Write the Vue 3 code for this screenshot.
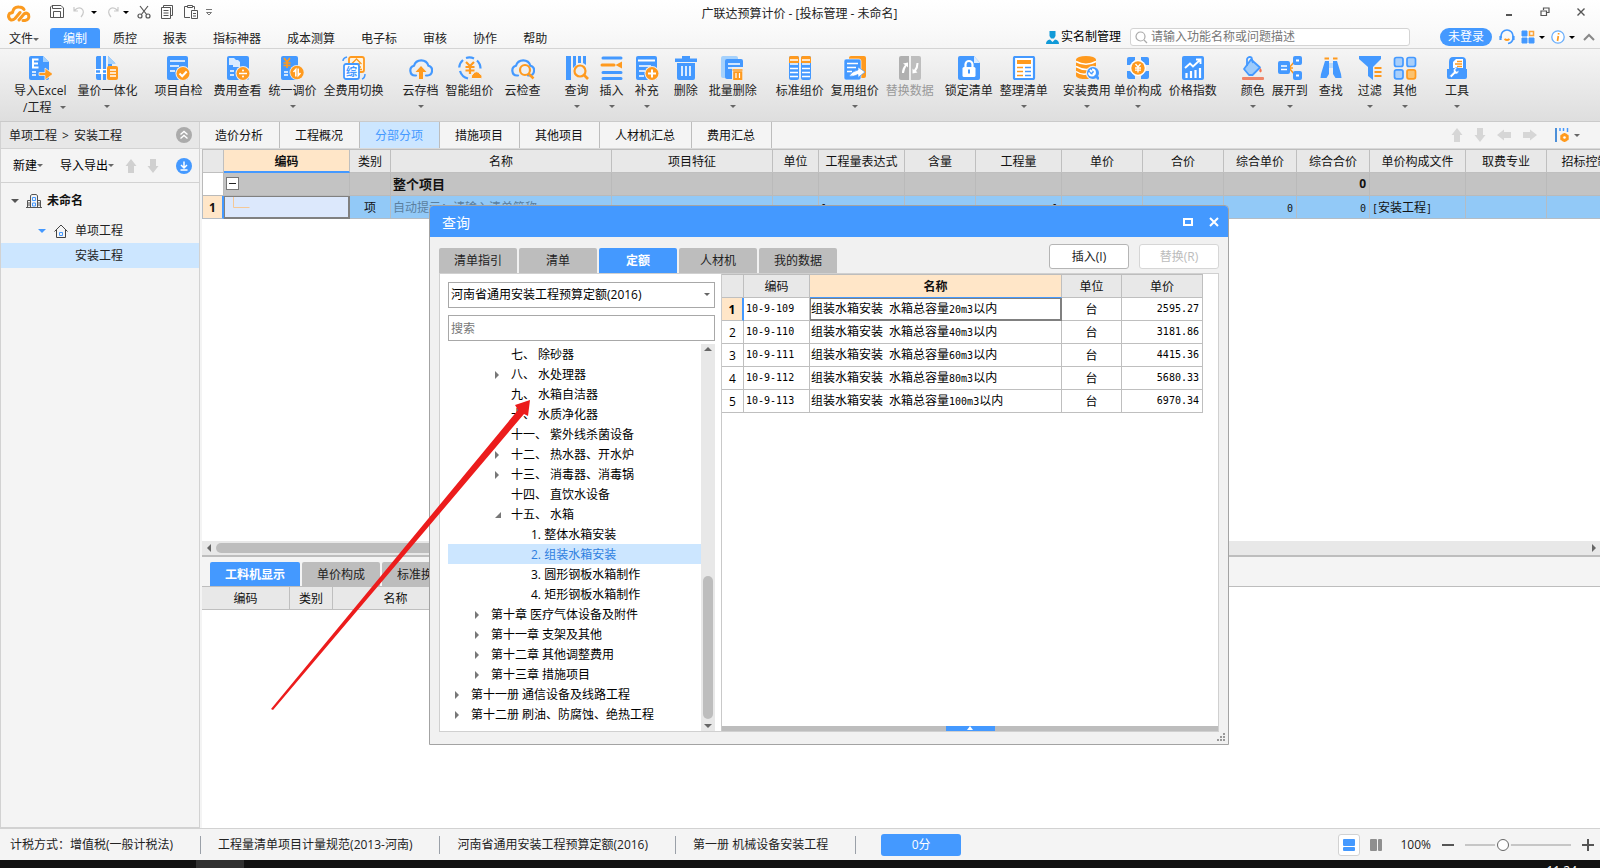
<script setup>
import { ref } from 'vue'

const menus = ['编制', '质控', '报表', '指标神器', '成本测算', '电子标', '审核', '协作', '帮助']

const B = '#4499ff'
const O = '#ff9a1e'
const L = '#a5d1fc'
const badge = (inner) => `<circle cx="17" cy="17.500" r="7.500" fill="#eeeeee"/><circle cx="17" cy="17.500" r="6.500" fill="${O}"/>${inner}`
const cloud = `<path d="M7 19.500H6a5 5 0 0 1-1-9.800a7.500 7.500 0 0 1 14.400 0A5 5 0 0 1 18.500 19.500H17" fill="none" stroke="${B}" stroke-width="2.200" stroke-linecap="round"/>`
const icons = {
  excel: `<path d="M3 0h12l6 6v16a2 2 0 0 1-2 2H3a2 2 0 0 1-2-2V2a2 2 0 0 1 2-2z" fill="${B}"/><path d="M15 0v6h6z" fill="${L}"/><path d="M10.500 3.500H5v8h5.500M5 7.500h5" fill="none" stroke="#fff" stroke-width="2"/><path d="M4 16h4M4 19h4" stroke="#fff" stroke-width="1.500"/><path d="M11 16.500h6V12l8 6-8 6v-4.500h-6z" fill="${O}" stroke="#eee" stroke-width=".8"/>`,
  merge: `<path d="M2 0h4v24H3a2 2 0 0 1-2-2V1zM8 0h3v13H8zM13 0l7 7h-3v4h-4z" fill="${B}"/><path d="M8 16h3v8H8z" fill="${B}"/><path d="M13 0l8 8h-8z" fill="${L}"/><path d="M0 13h12v5H0z" fill="#fff"/><path d="M1 15.500h4M8 15.500h3" stroke="${B}" stroke-width="2.500"/><rect x="12" y="10" width="11" height="14" rx="2" fill="${O}"/><path d="M15 14h6M15 17h6M15 20h6" stroke="#fff" stroke-width="1.300"/>`,
  check: `<rect x="1" y="0" width="21" height="24" rx="2" fill="${B}"/><path d="M4 5h15M4 10h9M4 15h5" stroke="#fff" stroke-width="1.600"/>${badge('<path d="M13.500 17.500l2.700 2.700 4.500-4.700" fill="none" stroke="#fff" stroke-width="2"/>')}`,
  fee: `<rect x="1" y="0" width="22" height="24" rx="2" fill="${B}"/><path d="M3 2h5l2 2v5H3zM7 4h5l2 2v5H7z" fill="#d9ebff"/><path d="M4 15h4M4 19h4" stroke="#fff" stroke-width="1.500"/>${badge('<path d="M13 17.500h8" stroke="#fff" stroke-width="1.500"/><circle cx="17" cy="14.500" r="1" fill="#fff"/><circle cx="17" cy="20.500" r="1" fill="#fff"/>')}`,
  adjust: `<rect x="0" y="0" width="17" height="24" rx="2" fill="${B}"/><path d="M3 2l3 4 3-4M6 6v6M2.500 7h7M2.500 9.500h7" fill="none" stroke="${O}" stroke-width="1.700"/><path d="M3 16h4M3 19h4" stroke="#fff" stroke-width="1.500"/><circle cx="16" cy="16.500" r="7.500" fill="#eee"/><circle cx="16" cy="16.500" r="6.700" fill="${O}"/><path d="M14.800 20.500v-7l-2.300 2.500M17.200 12.500v7l2.300-2.500" fill="none" stroke="#fff" stroke-width="1.500"/>`,
  full: `<rect x="7" y="1" width="15" height="15" rx="2" fill="#fff4e0" stroke="${O}" stroke-width="1.800"/><path d="M9.500 8l5-5 5 5M11 8h7M14.500 8v6M17 11h2M17 13.500h3" fill="none" stroke="${O}" stroke-width="1.300"/><rect x="2" y="8" width="15" height="15" rx="2" fill="#fff" stroke="${B}" stroke-width="1.800"/><text x="4" y="20" font-size="11" font-weight="700" fill="${B}">综</text><path d="M1 5q0-3 4-4M23 18q0 4-3 5" fill="none" stroke="${B}" stroke-width="1.500"/>`,
  cloudUp: `${cloud}<path d="M12 10l5.500 6H14v7h-4v-7H6.500z" fill="${O}"/>`,
  smart: `<path d="M10 22.500A11 11 0 0 1 2 15M1.200 11.500A11 11 0 0 1 5 4M8 2a11 11 0 0 1 8 .5M19 4.500a11 11 0 0 1 3.500 8" fill="none" stroke="${B}" stroke-width="2.200"/><path d="M8 6l4 4 4-4M12 10v8M7.500 11h9M7.500 14.500h9" fill="none" stroke="${O}" stroke-width="2.200"/><path d="M14 22.500a3 3 0 0 1 1-4.500 3.800 3.800 0 0 1 7 0 2.500 2.500 0 0 1 1 4.500z" fill="${O}" stroke="#eee"/>`,
  cloudFind: `${cloud}<circle cx="14" cy="14" r="5" fill="#f0f0f0" stroke="${O}" stroke-width="2.200"/><path d="M17.500 17.500l5 5" stroke="${O}" stroke-width="2.500"/>`,
  query: `<path d="M1 0h5v24H1zM8 0h3v9l-3 3zM13 0h3v7h-3zM18 0h3v9l-3-2z" fill="${B}"/><circle cx="15" cy="15" r="5.500" fill="#eee" stroke="${O}" stroke-width="2.200"/><path d="M19 19l4 4" stroke="${O}" stroke-width="2.600"/>`,
  insert: `<path d="M3 2h18M3 16.500h18M3 22.500h18" stroke="${B}" stroke-width="3" stroke-linecap="round"/><path d="M2 9h12" stroke="${O}" stroke-width="3" stroke-linecap="round"/><path d="M22 5.500v7L15.500 9z" fill="${O}"/>`,
  supply: `<rect x="1" y="0" width="21" height="24" rx="2" fill="${B}"/><path d="M3 4.500h17" stroke="#fff" stroke-width="2"/><path d="M4 10h12M4 15h6M4 20h5" stroke="#fff" stroke-width="1.500"/>${badge('<path d="M13 17.500h8M17 13.500v8" stroke="#fff" stroke-width="2"/>')}`,
  trash: `<path d="M1 2.500h7V0h8v2.500h7V6H1zM3 7h18v15a2 2 0 0 1-2 2H5a2 2 0 0 1-2-2z" fill="${B}"/><path d="M8 10v10M12 10v10M16 10v10" stroke="#fff" stroke-width="1.600"/>`,
  batch: `<rect x="0" y="0" width="17" height="22" rx="2" fill="${L}"/><rect x="4" y="3" width="18" height="20" rx="2" fill="${B}"/><path d="M7 8h12M7 12h6" stroke="#fff" stroke-width="1.500"/><path d="M11 11h12v13H11z" fill="#eee"/><path d="M11.500 14h10M13 16h7.500v8H13z" stroke="${O}" stroke-width="1.600" fill="${O}"/><path d="M15 17v5M18.500 17v5" stroke="#fff" stroke-width="1.200"/>`,
  standard: `<rect x="1" y="0" width="10" height="24" rx="2" fill="${B}"/><rect x="13" y="0" width="10" height="24" rx="2" fill="${B}"/><path d="M1 7V2a2 2 0 0 1 2-2h6a2 2 0 0 1 2 2v5zM13 7V2a2 2 0 0 1 2-2h6a2 2 0 0 1 2 2v5z" fill="${O}"/><path d="M2 4h8M14 4h8M2 8h8M14 8h8M2 12.500h8M14 12.500h8M2 16.500h8M14 16.500h8M2 20.500h8M14 20.500h8" stroke="#fff" stroke-width="1.400"/>`,
  reuse: `<rect x="6" y="0" width="17" height="22" rx="2" fill="${O}"/><rect x="1" y="3" width="17" height="21" rx="2" fill="${B}" stroke="#fff" stroke-width=".6"/><path d="M4 7.500h11M4 11.500h9M4 15.500h5" stroke="#fff" stroke-width="1.500"/><path d="M6 20q5 1 9-1.500v3l7-5.500-7-5v3q-6 1-9 6z" fill="#fff" stroke="${B}" stroke-width=".7"/>`,
  swap: `<path d="M3 0h8v24H3a2 2 0 0 1-2-2V2a2 2 0 0 1 2-2z" fill="#b0b0b0"/><path d="M13 0h8a2 2 0 0 1 2 2v20a2 2 0 0 1-2 2h-8z" fill="#bebebe"/><path d="M4 17q0-5 3-8l-2-1.500 5-1v5l-1.500-1.500Q6.500 13 6 17zM20.500 7q0 5-2.500 8l1.500 1.500-5 1v-5l1.500 1.500Q18.500 11 18.500 7z" fill="#fff"/>`,
  lock: `<path d="M3 0h14l6 7v15a2 2 0 0 1-2 2H3a2 2 0 0 1-2-2V2a2 2 0 0 1 2-2z" fill="${B}"/><path d="M17 0v7h6z" fill="#dcecff"/><rect x="5.500" y="11" width="13" height="10" rx="1.500" fill="#fff"/><path d="M8.500 11V8.500a3.500 3.500 0 0 1 7 0V11" fill="none" stroke="#fff" stroke-width="2.200"/><path d="M12 13.500v4" stroke="${B}" stroke-width="2"/>`,
  tidy: `<rect x="2" y="1" width="20" height="22" rx="1" fill="#fff" stroke="${B}" stroke-width="2.200"/><rect x="5" y="4" width="14" height="4" fill="${O}"/><path d="M5 11.500h6M5 15.500h6M5 19.500h6" stroke="${O}" stroke-width="1.600"/><path d="M13 11.500h6M13 15.500h6M13 19.500h6" stroke="${B}" stroke-width="1.600"/>`,
  install: `<path d="M1 3.500v16C1 21.500 5 23 9 23h5v-8l7-4V3.500z" fill="${O}"/><ellipse cx="11" cy="3.700" rx="10" ry="3.700" fill="${O}"/><path d="M1 5.500q10 5.500 20 0M1 10.500q10 5.500 18 1M1 15.500q6 4 12 2" fill="none" stroke="#fff" stroke-width="1.500"/><circle cx="18" cy="17" r="7.200" fill="#eee"/><circle cx="18" cy="17" r="6" fill="${B}"/><path d="M15 14l2 2M23 22l-5-5M17 13.500a3 3 0 1 1-3 3" stroke="#fff" stroke-width="1.900" fill="none"/><path d="M20 19l4 4" stroke="${B}" stroke-width="3"/>`,
  unit: `<path d="M3 1h6v3l-5 5H1V3a2 2 0 0 1 2-2zM15 1h6a2 2 0 0 1 2 2v6h-3l-5-5zM1 15h3l5 5v3H3a2 2 0 0 1-2-2zM20 15h3v6a2 2 0 0 1-2 2h-6v-3z" fill="${B}"/><circle cx="12" cy="12" r="8" fill="#fff"/><circle cx="12" cy="12" r="6.700" fill="${O}"/><path d="M9.500 8l2.500 3 2.500-3M12 11v5.500M9 12h6M9 14.200h6" fill="none" stroke="#fff" stroke-width="1.300"/>`,
  price: `<rect x="1" y="0" width="22" height="24" rx="2" fill="${B}"/><path d="M4 12l5-4.500 3 3L19 4M15 3.500h4.500V8" fill="none" stroke="#fff" stroke-width="1.900"/><path d="M5.500 22v-5M10 22v-7M14.500 22v-8M19 22V12" stroke="#fff" stroke-width="2.200"/>`,
  color: `<path d="M10 3.500l9 8-7.500 7.500H8L3 13z" fill="#9dcbfb" stroke="${B}" stroke-width="1.800" stroke-linejoin="round"/><path d="M6 10V3a3 3 0 0 1 4.500-1.500L12 7" fill="none" stroke="${B}" stroke-width="1.800"/><path d="M19.500 12q2.500 3 0 4.500-2.500-1.500 0-4.500z" fill="#f4744f"/><rect x="1" y="21" width="22" height="3" rx="1" fill="#ef8467"/>`,
  expand: `<path d="M11 12h4M11 12l6-7M11 12l6 7" stroke="${O}" stroke-width="1.600"/><rect x="0" y="5" width="12" height="13" rx="2" fill="${B}"/><path d="M3 10h6M3 13.500h6" stroke="#fff" stroke-width="1.500"/><rect x="15" y="0" width="9" height="9" rx="2" fill="${B}"/><rect x="15" y="15" width="9" height="9" rx="2" fill="${B}"/><path d="M18 4.500h3M18 19.500h3" stroke="#fff" stroke-width="2"/>`,
  find: `<path d="M6 5h4v13L7.500 22H1.500L2 18zM14 5h4l4 13 .5 4h-6L14 18z" fill="${B}"/><path d="M10 7h4v5h-4z" fill="#b9d9fb"/><path d="M5.500 2.500h4.500M14 2.500h4.500" stroke="${O}" stroke-width="2"/>`,
  filter: `<path d="M1 0h22v3l-8 8v13l-5-4v-9L1 3z" fill="${B}"/><path d="M16.500 12h7M16.500 16h7M16.500 20h7" stroke="${O}" stroke-width="1.800"/>`,
  other: `<g stroke-width="1.700" stroke="${B}" fill="#a9cffa"><rect x="1.500" y="1.500" width="8.500" height="9" rx="2"/><rect x="14" y="1.500" width="8.500" height="9" rx="2"/><rect x="1.500" y="13.800" width="8.500" height="9" rx="2"/></g><rect x="14" y="13.800" width="8.500" height="9" rx="2" fill="#fbc26f" stroke="${O}" stroke-width="1.700"/>`,
  tool: `<path d="M8 1h9a4 4 0 0 1 4 4v8h1v8a2 2 0 0 1-2 2H4a2 2 0 0 1-2-2v-8h2V6q0-5 4-5z" fill="${B}"/><path d="M8 12V6l3-3h7v9z" fill="#fff"/><path d="M12 5.500h5M10 8h7M12 10.500h5" stroke="${O}" stroke-width="1.300"/><path d="M4.500 20l4-4a3.500 3.500 0 0 1 4-4.500l-2 2.500 1 1.500 2.500-1a3.500 3.500 0 0 1-4 3.500l-3.500 3.500z" fill="#fff" stroke="${B}" stroke-width=".6"/>`
}

const ribbon = [
  { t: '导入Excel', sub: '/工程', i: 'excel', g: 'g0', c: 1 },
  { t: '量价一体化', i: 'merge', g: 'g11', c: 1 },
  { t: '项目自检', i: 'check', g: 'g17' },
  { t: '费用查看', i: 'fee', g: 'g11' },
  { t: '统一调价', i: 'adjust', g: 'g7', c: 1 },
  { t: '全费用切换', i: 'full', g: 'g7' },
  { t: '云存档', i: 'cloudUp', g: 'g19', c: 1 },
  { t: '智能组价', i: 'smart', g: 'g7' },
  { t: '云检查', i: 'cloudFind', g: 'g11' },
  { t: '查询', i: 'query', g: 'g24', c: 1 },
  { t: '插入', i: 'insert', g: 'g11', c: 1 },
  { t: '补充', i: 'supply', g: 'g11', c: 1 },
  { t: '删除', i: 'trash', g: 'g15' },
  { t: '批量删除', i: 'batch', g: 'g11', c: 1 },
  { t: '标准组价', i: 'standard', g: 'g19' },
  { t: '复用组价', i: 'reuse', g: 'g7', c: 1 },
  { t: '替换数据', i: 'swap', g: 'g7', off: 1 },
  { t: '锁定清单', i: 'lock', g: 'g11' },
  { t: '整理清单', i: 'tidy', g: 'g7', c: 1 },
  { t: '安装费用', i: 'install', g: 'g15', c: 1 },
  { t: '单价构成', i: 'unit', g: 'g3', c: 1 },
  { t: '价格指数', i: 'price', g: 'g7' },
  { t: '颜色', i: 'color', g: 'g24', c: 1 },
  { t: '展开到', i: 'expand', g: 'g7', c: 1 },
  { t: '查找', i: 'find', g: 'g11' },
  { t: '过滤', i: 'filter', g: 'g15', c: 1 },
  { t: '其他', i: 'other', g: 'g11', c: 1 },
  { t: '工具', i: 'tool', g: 'g28', c: 1 }
]

const subTabs = ['造价分析', '工程概况', '分部分项', '措施项目', '其他项目', '人材机汇总', '费用汇总']

const cols = [
  ['', 22], ['编码', 126], ['类别', 41], ['名称', 221], ['项目特征', 161], ['单位', 46], ['工程量表达式', 86],
  ['含量', 71], ['工程量', 86], ['单价', 81], ['合价', 81], ['综合单价', 73], ['综合合价', 73],
  ['单价构成文件', 96], ['取费专业', 81], ['招标控制价', 90]
]
const item = [
  ['项', 'mid'], ['自动提示：请输入清单简称', 'hint'], [''], [''], ['1'], [''], ['1', 'num'], [''], [''],
  ['0', 'num'], ['0', 'num'], ['[安装工程]'], [''], ['']
]

const dlgTabs = ['清单指引', '清单', '定额', '人材机', '我的数据']
const tree = [
  ['七、 除砂器', 2, ''], ['八、 水处理器', 2, 'r'], ['九、 水箱自洁器', 2, ''], ['十、 水质净化器', 2, ''],
  ['十一、 紫外线杀菌设备', 2, ''], ['十二、 热水器、开水炉', 2, 'r'], ['十三、 消毒器、消毒锅', 2, 'r'],
  ['十四、 直饮水设备', 2, ''], ['十五、 水箱', 2, 'd'], ['1. 整体水箱安装', 3, ''], ['2. 组装水箱安装', 3, ''],
  ['3. 圆形钢板水箱制作', 3, ''], ['4. 矩形钢板水箱制作', 3, ''], ['第十章 医疗气体设备及附件', 1, 'r'],
  ['第十一章 支架及其他', 1, 'r'], ['第十二章 其他调整费用', 1, 'r'], ['第十三章 措施项目', 1, 'r'],
  ['第十一册 通信设备及线路工程', 0, 'r'], ['第十二册 刷油、防腐蚀、绝热工程', 0, 'r']
]
const quota = [
  ['10-9-109', '组装水箱安装 水箱总容量20m3以内', '2595.27'],
  ['10-9-110', '组装水箱安装 水箱总容量40m3以内', '3181.86'],
  ['10-9-111', '组装水箱安装 水箱总容量60m3以内', '4415.36'],
  ['10-9-112', '组装水箱安装 水箱总容量80m3以内', '5680.33'],
  ['10-9-113', '组装水箱安装 水箱总容量100m3以内', '6970.34']
]
// Splits a cell into Latin and Chinese runs so that each run gets its own face.
const runs = (s) => s.match(/[\x20-\x7e]+|[^\x20-\x7e]+/g) || []
const latin = (s) => /^[\x20-\x7e]/.test(s)

const selected = ref(10)
const zoom = ref(34)
const keyword = ref('')
const search = ref('')
</script>

<template>
  <div class="app">
    <header class="titlebar">
      <svg class="logo" width="24" height="18" viewBox="0 0 24 18" fill="none" stroke="#fb9a1f" stroke-width="3" stroke-linecap="round" stroke-linejoin="round">
        <path d="M13 7.500L8 13.500Q6 15.500 4 15Q0 12.500 2.500 8.500L5.500 7.500Q6.500 1.500 12 2Q15.500 2 17 4.500" />
        <path d="M12 15L17 9Q19.500 7 21.500 9.500Q23 14.500 18 15.500H16" />
      </svg>
      <div class="quick">
        <button aria-label="保存"><svg width="16" height="16" viewBox="0 0 16 16" fill="none" stroke="#555"><path d="M1.500 3v10.500h13V4L12 1.500H3L1.500 3zM3.500 1.500v3h9M4.500 13.500v-6h7v6" /></svg></button>
        <button class="dim" aria-label="撤销"><svg width="14" height="14" viewBox="0 0 14 14" fill="none" stroke="#c9c9c9" stroke-width="1.200"><path d="M2 2v4h4M2.500 5.500Q6 1.500 9.500 3.500q4 3-.5 8.500" /></svg></button>
        <i class="tri black"></i>
        <button class="dim r" aria-label="恢复"><svg width="14" height="14" viewBox="0 0 14 14" fill="none" stroke="#c9c9c9" stroke-width="1.200"><path d="M12 2v4H8M11.500 5.500Q8 1.500 4.500 3.500q-4 3 .5 8.500" /></svg></button>
        <i class="tri black"></i>
        <button class="cut" aria-label="剪切"><svg width="14" height="14" viewBox="0 0 14 14" fill="none" stroke="#555" stroke-width="1.200"><path d="M3 1l7 9M11 1L4 10" /><circle cx="3" cy="11" r="2" /><circle cx="11" cy="11" r="2" /></svg></button>
        <button class="cp" aria-label="复制"><svg width="14" height="16" viewBox="0 0 14 16" fill="none" stroke="#555"><path d="M3.500 3V1.500h9v10H11M1.500 3.500h9v11h-9zM3.500 6.500h5M3.500 9h5M3.500 11.500h5" /></svg></button>
        <button class="cp" aria-label="粘贴"><svg width="16" height="16" viewBox="0 0 16 16" fill="none" stroke="#555"><path d="M7 13.500H1.500v-11h3M9 2.500h2.500v3M4.500 3.500v-2h5v2zM8.500 6.500h6v8h-6zM10 9.500h3M10 12h3" /></svg></button>
        <svg class="more" width="8" height="8" viewBox="0 0 8 8" fill="none" stroke="#777"><path d="M1 1.500h6M1.500 4.500h5L4 7z" /></svg>
      </div>
      <h1>广联达预算计价 - [投标管理 - 未命名]</h1>
      <div class="winbtns">
        <button aria-label="最小化"><svg width="10" height="10" viewBox="0 0 10 10"><path d="M2 8h6" stroke="#555" stroke-width="2" /></svg></button>
        <button aria-label="还原"><svg width="10" height="10" viewBox="0 0 10 10" fill="none" stroke="#555" stroke-width="1.200"><path d="M3.500 3V1h5.500v4.500H7M1 4h5.500v4.500H1z" /></svg></button>
        <button aria-label="关闭"><svg width="10" height="10" viewBox="0 0 10 10" stroke="#555" stroke-width="1.400"><path d="M1.500 1.500l7 7M8.500 1.500l-7 7" /></svg></button>
      </div>
    </header>

    <nav class="menubar">
      <button class="file">文件<i class="tri"></i></button>
      <button v-for="(m, k) in menus" :key="m" class="menu" :class="{ on: k === 0 }">{{ m }}</button>
      <div class="right">
        <button class="realname"><svg width="13" height="13" viewBox="0 0 13 13" fill="#109ad8"><path d="M3.500 0h6v5L8 7.500H5L3.500 5zM0 13q0-4 4-4.500L6.500 11 9 8.500q4 .5 4 4.500z" /></svg>实名制管理</button>
        <label class="find"><svg width="13" height="13" viewBox="0 0 13 13" fill="none" stroke="#aaa" stroke-width="1.200"><circle cx="5.500" cy="5.500" r="4.500" /><path d="M9 9l3 3" /></svg><input v-model="search" type="text" placeholder="请输入功能名称或问题描述" aria-label="搜索功能" /></label>
        <button class="login">未登录</button>
        <button class="i1" aria-label="客服"><svg width="16" height="16" viewBox="0 0 16 16" fill="none" stroke-width="1.700"><path d="M2 9V7a6 6 0 0 1 12 0v3q-1 4-5 4.500" stroke="#4499ff" /><path d="M1.500 7v4M14.500 7v4" stroke="#4499ff" stroke-width="2.200" /><path d="M5.500 10q2.500 2 5 0" stroke="#ff9a1e" /></svg></button>
        <button class="i2" aria-label="应用"><svg width="14" height="14" viewBox="0 0 14 14"><path d="M1 1h5v5H1zM1 8h5v5H1zM8 8h5v5H8z" fill="#4499ff" stroke="#4499ff" stroke-linejoin="round" /><rect x="8.500" y="1.500" width="4" height="4" fill="none" stroke="#fba53c" stroke-width="1.500" /></svg><i class="tri black"></i></button>
        <button class="i2" aria-label="信息"><svg width="14" height="14" viewBox="0 0 14 14"><circle cx="7" cy="7" r="6.200" fill="#fff" stroke="#6aaefb" stroke-width="1.300" /><path d="M7.600 3v1.500M7.300 6l-.8 5" stroke="#ff9a1e" stroke-width="1.700" /></svg><i class="tri black"></i></button>
        <button class="i3" aria-label="收起功能区"><svg width="12" height="8" viewBox="0 0 12 8" fill="none" stroke="#888" stroke-width="2"><path d="M1 7l5-5 5 5" /></svg></button>
      </div>
    </nav>

    <section class="ribbon">
      <button v-for="r in ribbon" :key="r.t" class="tool" :class="[r.g, { off: r.off }]">
        <svg width="24" height="24" viewBox="0 0 24 24" v-html="icons[r.i]"></svg>
        <span>{{ r.t }}</span>
        <span v-if="r.sub" class="sub">{{ r.sub }}<i class="tri"></i></span>
        <i v-else-if="r.c" class="tri below"></i>
      </button>
    </section>

    <div class="work">
      <aside>
        <div class="crumb">
          <span>单项工程</span><span class="gt">&gt;</span><span>安装工程</span>
          <button aria-label="折叠"><svg width="16" height="16" viewBox="0 0 16 16"><circle cx="8" cy="8" r="8" fill="#ababab" /><path d="M4.500 7.500L8 4.500l3.500 3M4.500 11.500L8 8.500l3.500 3" fill="none" stroke="#fff" stroke-width="1.400" /></svg></button>
        </div>
        <div class="ptools">
          <button>新建<i class="tri"></i></button>
          <button class="io">导入导出<i class="tri"></i></button>
          <button class="ar" aria-label="上移"><svg width="12" height="16" viewBox="0 0 12 16" fill="#d0d0d0"><path d="M6 1l5.500 7H9v7H3V8H.5z" /></svg></button>
          <button class="ar" aria-label="下移"><svg width="12" height="16" viewBox="0 0 12 16" fill="#d0d0d0"><path d="M6 15L.5 8H3V1h6v7h2.500z" /></svg></button>
          <button class="dl" aria-label="下载"><svg width="16" height="16" viewBox="0 0 16 16"><circle cx="8" cy="8" r="8" fill="#4499ff" /><path d="M8 3.500v6M5 7l3 3 3-3M4.500 12h7" fill="none" stroke="#fff" stroke-width="1.500" /></svg></button>
        </div>
        <ul class="ptree">
          <li class="root"><i class="tri big"></i>
            <svg width="16" height="16" viewBox="0 0 16 16" fill="none" stroke="#555"><path d="M0 14.500h16M4.500 14V2.500L6 1.500h4l1.500 1V14M1.500 14V7.500h3M14.500 14V7.500h-3M2 10h2M2 12h2M12 10h2M12 12h2" /><path d="M6.500 4.500h3v3h-3zM6.500 10h3v3h-3z" stroke="#4499ff" /></svg>未命名</li>
          <li class="child"><i class="tri big blue"></i>
            <svg width="14" height="14" viewBox="0 0 14 14" fill="none" stroke="#444"><path d="M.5 7.500L7 1l6.500 6.500M2.500 6v7.500h9V6" /><path d="M5.500 8.500h3v3h-3z" stroke="#4499ff" /></svg>单项工程</li>
          <li class="leaf">安装工程</li>
        </ul>
      </aside>

      <main>
        <div class="subtabs">
          <button v-for="(s, k) in subTabs" :key="s" :class="{ on: k === 2 }">{{ s }}</button>
          <div class="nav">
            <svg width="12" height="16" viewBox="0 0 12 16" fill="#d6d6d6"><path d="M6 1l5.500 7H9v7H3V8H.5z" /></svg>
            <svg width="12" height="16" viewBox="0 0 12 16" fill="#d6d6d6"><path d="M6 15L.5 8H3V1h6v7h2.500z" /></svg>
            <svg width="16" height="12" viewBox="0 0 16 12" fill="#d6d6d6"><path d="M1 6L8 .5V3h7v6H8v2.500z" /></svg>
            <svg width="16" height="12" viewBox="0 0 16 12" fill="#d6d6d6"><path d="M15 6L8 .5V3H1v6h7v2.500z" /></svg>
            <button class="gear" aria-label="列设置"><svg width="14" height="16" viewBox="0 0 14 16"><path d="M1 1v14" stroke="#4c8fd8" stroke-width="2" /><path d="M5 1v3M8.500 1v3M12.500 1v4" stroke="#4499ff" stroke-width="1.500" /><circle cx="9.500" cy="10.500" r="3" fill="none" stroke="#ff9a1e" stroke-width="2.500" /><path d="M9.500 6v9M5.500 8.500l8 4M5.500 12.500l8-4" stroke="#ff9a1e" stroke-width="1.500" /><circle cx="9.500" cy="10.500" r="1.300" fill="#fff" /></svg><i class="tri"></i></button>
          </div>
        </div>

        <div class="upper">
          <table class="grid main">
            <colgroup><col v-for="(c, k) in cols" :key="k" :style="{ width: c[1] + 'px' }" /></colgroup>
            <thead><tr><th v-for="(c, k) in cols" :key="k" :class="{ cur: k === 1 }">{{ c[0] }}</th></tr></thead>
            <tbody>
              <tr class="total">
                <td class="no"></td>
                <td class="branch"><svg width="14" height="14" viewBox="0 0 14 14"><rect x=".5" y=".5" width="12" height="12" fill="#fff" stroke="#777" /><path d="M3 6.500h7" stroke="#222" /></svg></td>
                <td></td><td class="strong">整个项目</td>
                <td v-for="k in 8" :key="k"></td><td class="num strong">0</td><td></td><td></td><td></td>
              </tr>
              <tr class="item">
                <td class="no cur">1</td>
                <td class="edit"><svg width="26" height="20" viewBox="0 0 26 20"><path d="M8.500 0v10.500h16" fill="none" stroke="#f5c896" /></svg></td>
                <td v-for="(c, k) in item" :key="k" :class="c[1]"><span v-for="(r, n) in runs(c[0])" :key="n" :class="{ mono: latin(r) }">{{ r }}</span></td>
              </tr>
            </tbody>
          </table>
        </div>
        <div class="hscroll"><i class="left"></i><div class="thumb"></div><i class="rgt"></i></div>
        <div class="lower">
          <div class="ltabs"><button class="on">工料机显示</button><button>单价构成</button><button>标准换算</button></div>
          <table class="grid sub">
            <colgroup><col class="w88" /><col class="w43" /><col class="w126" /></colgroup>
            <thead><tr><th>编码</th><th>类别</th><th>名称</th></tr></thead>
          </table>
        </div>
      </main>
    </div>

    <footer class="status">
      <span>计税方式：增值税(一般计税法)</span>
      <span>工程量清单项目计量规范(2013-河南)</span>
      <span>河南省通用安装工程预算定额(2016)</span>
      <span>第一册 机械设备安装工程</span>
      <button class="score">0分</button>
      <div class="view">
        <button class="v on" aria-label="上下布局"><svg width="12" height="12" viewBox="0 0 12 12" fill="#4499ff"><rect width="12" height="7" rx="1" /><rect y="8" width="12" height="4" rx="1" /></svg></button>
        <button class="v" aria-label="左右布局"><svg width="12" height="12" viewBox="0 0 12 12" fill="#8f8f8f"><rect width="7" height="12" rx="1" /><rect x="8" width="4" height="12" rx="1" /></svg></button>
        <span class="pct">100%</span>
        <button aria-label="缩小"><svg width="12" height="12" viewBox="0 0 12 12"><path d="M0 6h12" stroke="#555" stroke-width="2" /></svg></button>
        <input v-model="zoom" type="range" min="0" max="100" aria-label="缩放" />
        <button aria-label="放大"><svg width="12" height="12" viewBox="0 0 12 12"><path d="M0 6h12M6 0v12" stroke="#555" stroke-width="2" /></svg></button>
      </div>
    </footer>
    <div class="taskbar"><div class="task"></div><time>11:24</time></div>

    <section class="dialog" role="dialog" aria-label="查询">
      <div class="dhead">
        <h2>查询</h2>
        <button aria-label="最大化"><svg width="10" height="10" viewBox="0 0 10 10"><rect x="1" y="2" width="8" height="6" fill="none" stroke="#fff" stroke-width="2" /></svg></button>
        <button aria-label="关闭查询"><svg width="10" height="10" viewBox="0 0 10 10" stroke="#fff" stroke-width="2"><path d="M1 1l8 8M9 1L1 9" /></svg></button>
      </div>
      <div class="dbar">
        <button v-for="(t, k) in dlgTabs" :key="t" class="dtab" :class="{ on: k === 2 }">{{ t }}</button>
        <div class="acts"><button class="act">插入(I)</button><button class="act" disabled>替换(R)</button></div>
      </div>
      <div class="dbody">
        <div class="lib">
          <div class="sel"><select aria-label="定额库"><option>河南省通用安装工程预算定额(2016)</option></select><i class="tri"></i></div>
          <input v-model="keyword" class="kw" type="text" placeholder="搜索" aria-label="搜索定额" />
          <div class="treebox">
            <ul class="qtree">
              <li v-for="(n, k) in tree" :key="k" :class="['l' + n[1], { picked: k === selected }]" @click="selected = k"><i :class="n[2]"></i>{{ n[0] }}</li>
            </ul>
            <div class="vscroll"><i class="up"></i><div class="vthumb"></div><i class="down"></i></div>
          </div>
        </div>
        <div class="result">
          <table class="grid quota">
            <colgroup><col class="w22" /><col class="w66" /><col class="w252" /><col class="w60" /><col class="w81" /></colgroup>
            <thead><tr><th></th><th>编码</th><th class="cur">名称</th><th>单位</th><th>单价</th></tr></thead>
            <tbody>
              <tr v-for="(q, k) in quota" :key="q[0]">
                <td class="no" :class="{ cur: k === 0 }">{{ k + 1 }}</td>
                <td class="mono">{{ q[0] }}</td>
                <td class="name" :class="{ edit: k === 0 }"><span v-for="(r, n) in runs(q[1])" :key="n" :class="{ mono: latin(r) }">{{ r }}</span></td>
                <td class="mid">台</td>
                <td class="num mono">{{ q[2] }}</td>
              </tr>
            </tbody>
          </table>
          <div class="split"><button aria-label="展开详情"><svg width="6" height="5" viewBox="0 0 6 5" fill="#fff"><path d="M3 0l3 4H0z" /></svg></button></div>
        </div>
      </div>
      <svg class="grip" width="9" height="9" viewBox="0 0 9 9" fill="#999"><path d="M6 0h2v2H6zM3 3h2v2H3zM6 3h2v2H6zM0 6h2v2H0zM3 6h2v2H3zM6 6h2v2H6z" /></svg>
    </section>

    <svg class="pointer" width="270" height="320" viewBox="0 0 270 320" aria-hidden="true">
      <path d="M0 311L247 12 244 7 259 2 257 18 253 16 2 312z" fill="#ec1c1c" />
    </svg>
  </div>
</template>

<style>
body {
  margin: 0;
  overflow: hidden;
}
</style>

<style scoped>
.app {
  position: relative;
  display: flex;
  flex-direction: column;
  height: 100vh;
  overflow: hidden;
  background: #f4f4f4;
  color: #222;
  font: 12px/16px "Open Sans", "Noto Sans CJK SC", sans-serif;
}
button, input, select {
  font: inherit;
  color: inherit;
  border: 0;
  padding: 0;
  margin: 0;
  background: none;
}
button {
  display: inline-flex;
  align-items: center;
  justify-content: center;
  white-space: nowrap;
}
svg { flex: none; display: block; }
ul { list-style: none; margin: 0; padding: 0; }
h1, h2 { margin: 0; font: inherit; }
.tri {
  flex: none;
  border: 3px solid transparent;
  border-top-color: #666;
  border-bottom: 0;
}
.tri.black { border-top-color: #000; }
.tri.big { border-width: 4px 4px 0; border-top-color: #555; }
.tri.big.blue { border-top-color: #4499ff; }

.titlebar {
  display: grid;
  grid-template-columns: 33px 1fr auto 1fr;
  align-items: center;
  height: 28px;
  background: linear-gradient(#fff, #fafafa);
}
.logo { margin-left: 7px; }
.quick {
  display: flex;
  align-items: center;
  margin: 0 0 4px 16px;
}
.quick .dim { margin: 0 5px 0 7px; }
.quick .r { margin: 0 3px 0 9px; }
.quick .cut { margin-left: 8px; }
.quick .cp { margin-left: 9px; }
.quick .more { margin-left: 6px; }
h1 { margin-right: 34px; }
.winbtns {
  display: flex;
  justify-content: flex-end;
  gap: 26px;
  margin: 0 14px 4px 0;
}
.menubar {
  display: flex;
  align-items: stretch;
  height: 20px;
  background: linear-gradient(#fafafa, #f5f5f5);
  border-bottom: 1px solid #d4d4d4;
}
.file { width: 50px; padding: 2px 0 0 9px; justify-content: flex-start; }
.menu { padding: 2px 13px 0; }
.menu.on { background: #4499ff; color: #fff; border-radius: 3px 3px 0 0; }
.right {
  display: flex;
  align-items: center;
  margin-left: auto;
  padding: 0 5px 2px 0;
}
.realname { gap: 2px; margin-right: 9px; color: #000; }
.find {
  display: flex;
  align-items: center;
  width: 274px;
  height: 16px;
  gap: 3px;
  padding-left: 4px;
  background: #fff;
  border: 1px solid #d4d4d4;
  border-radius: 3px;
}
.find input { flex: 1; min-width: 0; height: 16px; outline: 0; }
input::placeholder { color: #777; opacity: 1; }
.login { width: 52px; height: 18px; margin: 0 7px 0 30px; border-radius: 9px; background: #4499ff; color: #fff; }
.i1 { margin-right: 6px; }
.i2 { gap: 4px; margin-right: 6px; }
.i3 { margin-left: 2px; }

.ribbon {
  display: flex;
  align-items: flex-start;
  height: 65px;
  padding: 7px 0 0 14px;
  background: linear-gradient(#f5f5f5, #dedede);
  border-bottom: 1px solid #cacaca;
}
.tool { flex: none; flex-direction: column; line-height: 18px; }
.tool span { margin-top: 2px; }
.tool .sub { display: flex; align-items: center; gap: 9px; margin: -1px 0 0 9px; line-height: 17px; }
.tool .below { margin-top: 5px; }
.tool.off { color: #999; }
.g3 { margin-left: 3px; }
.g7 { margin-left: 7px; }
.g11 { margin-left: 11px; }
.g15 { margin-left: 15px; }
.g17 { margin-left: 17px; }
.g19 { margin-left: 19px; }
.g24 { margin-left: 24px; }
.g28 { margin-left: 28px; }

.work { display: flex; flex: 1; min-height: 0; }
aside {
  flex: none;
  width: 198px;
  border: solid #d2d2d2;
  border-width: 0 1px 1px;
  background: #f4f4f4;
}
.crumb {
  display: flex;
  align-items: center;
  height: 26px;
  padding: 0 7px 0 8px;
  background: #e7e7e7;
  border-bottom: 1px solid #d2d2d2;
}
.crumb span { padding-top: 2px; }
.crumb .gt { margin: 0 5px; }
.crumb button { margin-left: auto; }
.ptools {
  display: flex;
  align-items: center;
  height: 33px;
  padding: 0 7px 0 12px;
  border-bottom: 1px solid #d2d2d2;
  color: #000;
}
.io { margin: 0 11px 0 17px; }
.ar { margin-right: 10px; }
.dl { margin-left: auto; }
.ptree { padding-top: 5px; }
.ptree li { display: flex; align-items: center; height: 25px; }
.ptree svg { margin: 0 7px; }
.root { padding-left: 10px; font-weight: 700; color: #111; margin-bottom: 5px; }
.ptree .root svg { margin-right: 5px; }
.child { padding-left: 37px; }
.child .tri { margin-right: 1px; }
.ptree .leaf { padding-left: 74px; background: #cce6ff; }

main {
  display: flex;
  flex-direction: column;
  flex: 1;
  min-width: 0;
  background: #f4f4f4;
}
.subtabs { display: flex; flex: none; height: 26px; border-bottom: 1px solid #d9d9d9; }
.subtabs > button { padding: 2px 16px 0 15px; border-right: 1px solid #bdbdbd; color: #111; background: #f4f4f4; }
.subtabs > button.on { background: #cce6ff; color: #4499ff; }
.nav { display: flex; align-items: center; gap: 11px; margin: 0 20px 0 auto; }
.nav svg + svg { margin-right: -1px; }
.gear { gap: 5px; margin-left: 7px; }
.upper { flex: 1; min-height: 0; margin-left: 2px; background: #fff; overflow: hidden; }

.grid {
  table-layout: fixed;
  width: 0;
  border-collapse: separate;
  border-spacing: 0;
  border-top: 1px solid #bdbdbd;
  color: #111;
}
.grid th, .grid td {
  box-sizing: border-box;
  height: 23px;
  padding: 2px 2px 0;
  border: solid #bfbfbf;
  border-width: 0 1px 1px 0;
  white-space: nowrap;
  overflow: hidden;
  text-align: left;
  line-height: 16px;
}
.grid th { background: #e8e8e8; font-weight: 400; text-align: center; }
.grid th.cur { background: #ffe6c8; font-weight: 700; border-bottom: 1px solid #4499ff; }
.main th.cur { border-bottom-width: 2px; }
.grid th:first-child, .grid td:first-child { border-left: 1px solid #bfbfbf; }
.grid .mid { text-align: center; }
.grid .num { text-align: right; padding-right: 3px; }
.grid .no { text-align: center; padding: 2px 0 0; }
.grid .no.cur { background: #ffe6c8; font-weight: 700; border-right: 2px solid #4499ff; }
.grid .mono { font-family: "DejaVu Sans Mono", monospace; font-size: 10px; white-space: pre; }
.grid td.mono { padding-top: 0; }
.grid td.edit { border: solid #808080; border-width: 1px 2px 2px 1px; padding: 1px 1px 0; }
.grid td.branch { padding-top: 0; }
.main .total td { background: #c3c3c3; border-color: #bababa; }
.main .total .no { background: #fff; }
.main .strong { font-size: 13px; font-weight: 700; padding-top: 0; }
.main .strong.num { font-size: 12px; }
.main .item td { background: #92c9f7; border-color: #b4bcc4; }
.main .item .no { background: #ffe6c8; border-right-color: #4499ff; }
.main .item td.edit { background: #dce8fc; border-color: #808080; padding: 0; vertical-align: top; }
.main .item .hint { color: #5a7f9f; }
.quota td { background: #fff; color: #000; }
.quota td.name { padding: 1px 1px 0; }
.quota td.edit { padding-left: 0; }

.hscroll { display: flex; align-items: center; flex: none; height: 14px; margin-left: 2px; padding: 0 4px 0 5px; background: #e8e8e8; border-bottom: 2px solid #bdbdbd; }
.hscroll i { flex: none; border: 4px solid transparent; }
.hscroll .left { border-left: 0; border-right: 4px solid #666; }
.hscroll .rgt { border-right: 0; border-left: 4px solid #666; margin-left: auto; }
.thumb { flex: none; width: 40%; height: 10px; margin-left: 5px; border-radius: 5px; background: #bdbdbd; }
.lower { flex: none; height: 271px; margin-left: 2px; background: #fff; }
.ltabs { display: flex; gap: 2px; height: 24px; padding: 5px 0 0 8px; background: #f4f4f4; border-bottom: 1px solid #bdbdbd; }
.ltabs button { padding: 2px 15px 0; border-radius: 2px 2px 0 0; background: #bdbdbd; }
.ltabs .on { background: #4499ff; color: #fff; font-weight: 700; }
.sub { border-top: 0; }
.sub th:first-child { border-left: 0; }
.w22 { width: 22px; }
.w43 { width: 43px; }
.w60 { width: 60px; }
.w66 { width: 66px; }
.w81 { width: 81px; }
.w88 { width: 88px; }
.w126 { width: 126px; }
.w252 { width: 252px; }

.status { display: flex; align-items: center; flex: none; height: 31px; padding-left: 10px; border-top: 1px solid #d2d2d2; background: #f4f4f4; }
.status > span { display: flex; align-items: center; height: 18px; padding-right: 27px; margin-right: 17px; border-right: 1px solid #9aa0a8; white-space: nowrap; }
.score { width: 80px; height: 22px; margin-left: 8px; border-radius: 3px; background: #4499ff; color: #fff; }
.view { display: flex; align-items: center; margin-left: auto; padding-right: 6px; }
.v { box-sizing: border-box; width: 22px; height: 22px; margin-right: 5px; }
.v.on { background: #fff; border: 1px solid #d2d2d2; border-radius: 3px; }
.pct { margin: 0 11px 0 8px; }
.view input { appearance: none; width: 106px; height: 14px; margin: 0 11px; }
.view input::-webkit-slider-runnable-track { height: 2px; background: #c6c6c6; }
.view input::-webkit-slider-thumb { appearance: none; box-sizing: border-box; width: 12px; height: 12px; margin-top: -5px; border: 1px solid #666; border-radius: 50%; background: #fff; box-shadow: 0 0 0 2px #f4f4f4; }
.taskbar { display: flex; justify-content: space-between; flex: none; height: 8px; padding: 0 23px 0 196px; background: #111; overflow: hidden; }
.task { width: 48px; height: 8px; background: #303030; }
time { padding-top: 3px; color: #fff; }

.dialog {
  position: absolute;
  left: 429px;
  top: 205px;
  box-sizing: border-box;
  width: 800px;
  height: 540px;
  display: flex;
  flex-direction: column;
  border: 1px solid #a3a3a3;
  border-radius: 4px 4px 0 0;
  background: #f1f1f1;
}
.dhead { display: flex; align-items: center; gap: 16px; flex: none; height: 31px; padding: 0 9px 0 12px; border-radius: 3px 3px 0 0; background: #4499ff; color: #fff; }
.dhead h2 { margin-right: auto; font-size: 14px; line-height: 20px; padding-top: 3px; }
.dbar { display: flex; align-items: flex-end; flex: none; gap: 2px; height: 36px; padding: 0 9px; }
.dtab { width: 78px; height: 25px; border-radius: 2px 2px 0 0; background: #bdbdbd; }
.dtab.on { background: #4499ff; color: #fff; font-weight: 700; }
.acts { display: flex; gap: 10px; margin: 0 0 4px auto; }
.act { box-sizing: border-box; width: 80px; height: 25px; border: 1px solid #b5b5b5; border-radius: 3px; background: #fff; }
.act:disabled { border-color: #d6d6d6; color: #bcbcbc; }
.dbody { display: flex; flex: 1; min-height: 0; margin: 0 9px 12px; border: 1px solid #d0d0d0; background: #fff; }
.lib { display: flex; flex-direction: column; flex: none; box-sizing: border-box; width: 282px; padding: 8px 6px 0 8px; border-right: 1px solid #c9c9c9; }
.sel { position: relative; margin-bottom: 7px; }
.sel select, .kw { display: block; box-sizing: border-box; width: 100%; height: 26px; padding: 0 2px; border: 1px solid #a8a8a8; background: #fff; appearance: none; color: #000; outline: 0; }
.sel .tri { position: absolute; right: 5px; top: 11px; }
.kw { margin-bottom: 3px; }
.treebox { display: flex; flex: 1; min-height: 0; }
.qtree { flex: 1; min-width: 0; overflow: hidden; color: #000; white-space: nowrap; }
.qtree li { display: flex; align-items: center; box-sizing: border-box; height: 20px; padding-top: 2px; }
.qtree .picked { background: #cce6ff; color: #2f7fe0; }
.qtree i { flex: none; box-sizing: border-box; width: 4px; height: 8px; margin-right: 12px; }
.qtree .r { border: solid transparent; border-width: 4px 0 4px 4px; border-left-color: #777; }
.qtree .d { width: 6px; height: 6px; margin-right: 10px; border: solid transparent; border-width: 0 0 6px 6px; border-bottom-color: #777; }
.l0 { padding-left: 7px; }
.l1 { padding-left: 27px; }
.l2 { padding-left: 47px; }
.l3 { padding-left: 67px; }
.vscroll { display: flex; flex-direction: column; align-items: center; justify-content: flex-end; box-sizing: border-box; width: 14px; padding: 3px 0; background: #e8e8e8; }
.vscroll i { flex: none; border: 4px solid transparent; }
.up { margin-bottom: auto; }
.vscroll .up { border-top-width: 0; border-bottom-color: #666; }
.vscroll .down { border-bottom-width: 0; border-top-color: #666; margin-top: 5px; }
.vthumb { width: 10px; height: 143px; border-radius: 5px; background: #bdbdbd; }
.result { display: flex; flex-direction: column; flex: 1; min-width: 0; }
.quota th:first-child, .quota td:first-child { border-left: 0; }
.split { display: flex; justify-content: center; margin-top: auto; height: 5px; background: #bdbdbd; }
.split button { width: 49px; height: 5px; background: #4499ff; }
.grip { position: absolute; right: 2px; bottom: 2px; }
.pointer { position: absolute; left: 271px; top: 398px; pointer-events: none; }
</style>
